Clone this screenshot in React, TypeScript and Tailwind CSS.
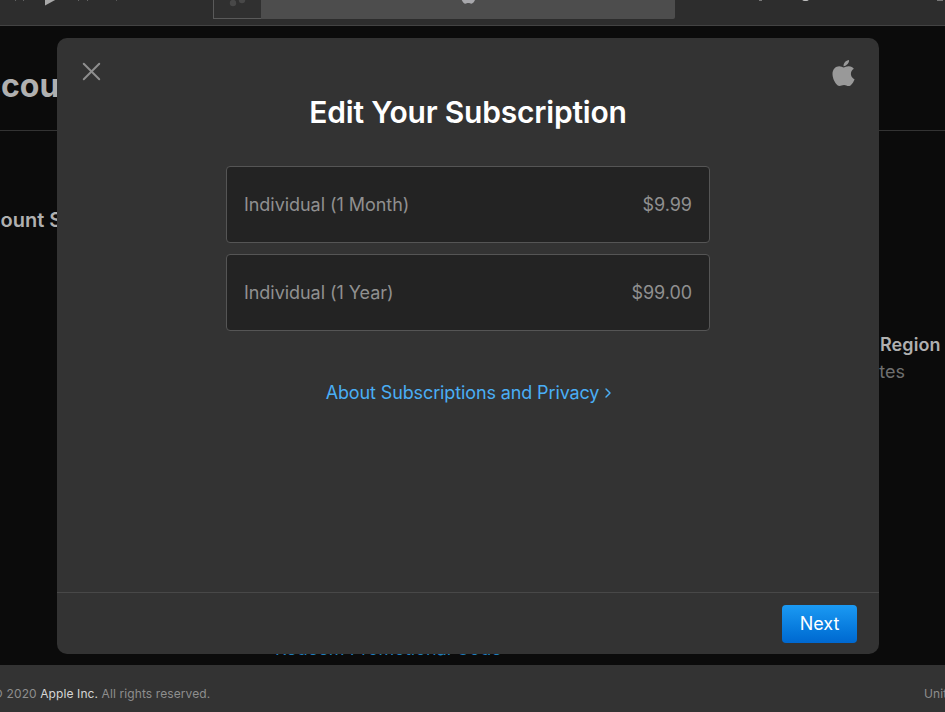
import { FaApple } from "react-icons/fa";
import { X, ChevronRight } from "lucide-react";

const plans = [
  { name: "Individual (1 Month)", price: "$9.99" },
  { name: "Individual (1 Year)", price: "$99.00" },
];

function Toolbar() {
  return (
    <div className="h-[26px] shrink-0 flex items-start overflow-hidden bg-[#2d2d2d] border-b border-[#434343]">
      <div className="w-[213px] h-[18px] flex items-start text-[#a9a9a9]">
        <svg width="125" height="6" viewBox="0 0 125 6" fill="currentColor">
          <path d="M45 -8 L45 5.5 L57 -1 Z" />
          <path d="M15 -3 L15 1 L20 -3 Z M23 -3 L23 1 L28 -3 Z" opacity="0.7" />
          <path d="M78 -3 L78 1 L83 -3 Z M87 -3 L87 1 L92 -3 Z M116 -3 L116 1 L120 -3 Z" opacity="0.7" />
        </svg>
      </div>
      <div className="w-[48px] h-[19px] border-l border-b border-[#5a5a5a] bg-[#303030] flex items-start justify-center overflow-hidden">
        <svg width="22" height="18" viewBox="0 0 22 18" fill="#484848">
          <circle cx="6" cy="3" r="3.2" />
          <circle cx="15" cy="0" r="3.2" />
        </svg>
      </div>
      <div className="relative w-[414px] h-[19px] bg-[#4d4d4d] overflow-hidden rounded-br-[2px]">
        <FaApple className="absolute left-[197px] top-[-15px] w-5 h-5 text-[#a8a8ac]" />
      </div>
      <div className="relative flex-1 h-[6px] overflow-hidden">
        <div className="absolute left-[127px] top-[-4px] w-[7px] h-[5px] rounded-full bg-[#bdbdbd]" />
        <div className="absolute left-[84px] top-[-2px] w-[3px] h-[3px] bg-[#777]" />
        <div className="absolute left-[262px] top-[-2px] w-[6px] h-[3px] bg-[#777]" />
      </div>
    </div>
  );
}

function Background() {
  return (
    <div className="flex-1 relative overflow-hidden bg-[#0b0b0b]">
      <div className="h-[105px] border-b border-[#333] flex items-end pb-[25px]">
        <span className="ml-[-41px] text-[32px] leading-[38px] font-bold text-[#b0b0b0]">Account</span>
      </div>
      <div className="flex justify-between pt-[77px]">
        <span className="ml-[-37px] text-xl leading-[24px] font-semibold text-[#b0b0b0]">Account Settings</span>
      </div>
      <div className="absolute left-[880px] top-[307px] w-[200px]">
        <p className="text-lg leading-[24px] font-semibold text-[#b0b0b0] tracking-[0.1px]">Region</p>
        <p className="text-lg leading-[24px] text-[#6f6f6f] ml-[-89px] mt-[3px]">United States</p>
      </div>
      <a className="absolute left-[275px] top-[611px] text-lg leading-[24px] text-[#1f7fbf]">Redeem Promotional Code</a>
    </div>
  );
}

function Footer() {
  return (
    <div className="h-[47px] shrink-0 bg-[#333] flex items-center justify-between text-xs text-[#8e8e8e] pt-[11px] tracking-[0.1px]">
      <p className="ml-[-8px] whitespace-nowrap">
        © 2020 <span className="text-[#d6d6d6]">Apple Inc.</span> All rights reserved.
      </p>
      <p className="ml-auto mr-[-50px] w-[71px] whitespace-nowrap">United States</p>
    </div>
  );
}

export default function App() {
  return (
    <div className="relative w-[945px] h-[712px] overflow-hidden flex flex-col font-['Inter',sans-serif]">
      <Toolbar />
      <Background />
      <Footer />

      {/* modal sits over the dimmed account page */}
      <div className="absolute left-[57px] top-[38px] w-[822px] h-[616px] rounded-[10px] bg-[#333] flex flex-col">
        <div className="flex-1 relative flex flex-col items-center">
          <button type="button" className="absolute left-[19px] top-[18px] text-[#8f8f8f]">
            <X className="w-[31px] h-[31px]" strokeWidth={1.5} />
          </button>
          <FaApple className="absolute right-[22px] top-[20px] w-[27px] h-[30px] text-[#999]" />
          <h1 className="mt-[53px] text-[30px] leading-[42px] font-semibold text-white tracking-[-0.2px]">
            Edit Your Subscription
          </h1>
          <div className="mt-[33px] w-[484px] flex flex-col gap-[11px]">
            {plans.map((p) => (
              <div
                key={p.name}
                className="h-[77px] px-[17px] flex items-center justify-between rounded-[4px] border border-[#555] bg-[#232323] text-lg text-[#909090] tracking-[-0.05px]"
              >
                <span>{p.name}</span>
                <span>{p.price}</span>
              </div>
            ))}
          </div>
          <a className="mt-[48px] ml-[6px] flex items-center text-lg leading-[28px] text-[#4aaef5] tracking-[-0.12px]">
            About Subscriptions and Privacy
            <ChevronRight className="ml-[1px] w-4 h-4" strokeWidth={2.2} />
          </a>
        </div>
        <div className="h-[62px] shrink-0 border-t border-[#484848] flex items-center justify-end pr-[22px]">
          <button
            type="button"
            className="w-[75px] h-[38px] rounded-[4px] bg-linear-to-b from-[#1b9af3] to-[#0068d0] text-lg text-white"
          >
            Next
          </button>
        </div>
      </div>
    </div>
  );
}
